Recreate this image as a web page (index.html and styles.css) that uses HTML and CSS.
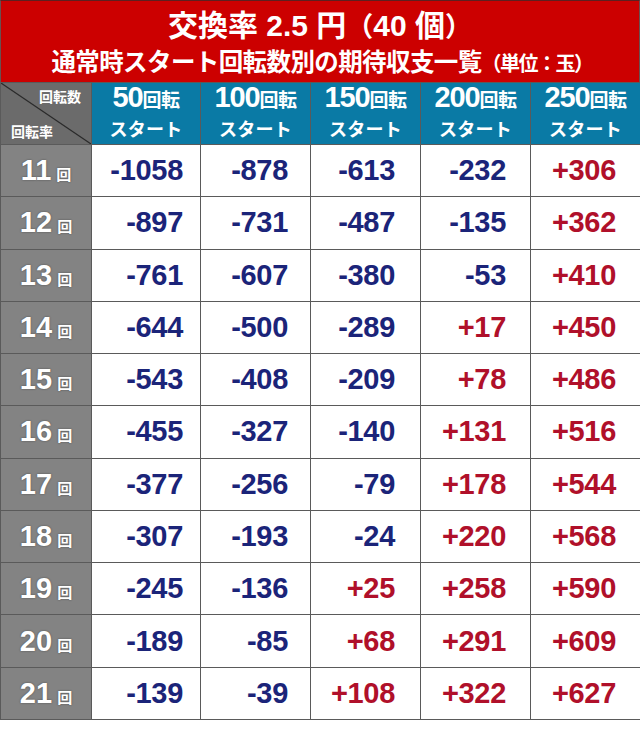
FILE: index.html
```html
<!DOCTYPE html>
<html lang="ja">
<head>
<meta charset="utf-8">
<title>交換率 2.5円（40個）</title>
<link rel="stylesheet" href="styles.css">
</head>
<body>
<div class="sheet">
  <header class="title">
    <div class="t1">交換率 2.5 円<span class="paren">（</span>40 個<span class="paren">）</span></div>
    <div class="t2">通常時スタート回転数別の期待収支一覧<span class="unit">（単位：玉）</span></div>
  </header>
  <table class="grid">
    <colgroup>
      <col class="c0"><col class="c1"><col class="c2"><col class="c3"><col class="c4"><col class="c5">
    </colgroup>
    <thead>
      <tr>
        <th class="corner">
          <svg class="diag" viewBox="0 0 91 62" preserveAspectRatio="none"><line x1="0" y1="0" x2="91" y2="62" stroke="#2a2a2a" stroke-width="1.2"/></svg>
          <span class="ctop">回転数</span>
          <span class="cbot">回転率</span>
        </th>
        <th class="colh"><span class="n">50</span><span class="k">回転</span><br><span class="s">スタート</span></th>
        <th class="colh"><span class="n">100</span><span class="k">回転</span><br><span class="s">スタート</span></th>
        <th class="colh"><span class="n">150</span><span class="k">回転</span><br><span class="s">スタート</span></th>
        <th class="colh"><span class="n">200</span><span class="k">回転</span><br><span class="s">スタート</span></th>
        <th class="colh"><span class="n">250</span><span class="k">回転</span><br><span class="s">スタート</span></th>
      </tr>
    </thead>
    <tbody>
      <tr><th class="rowh">11<span class="kai">回</span></th><td class="neg">-1058</td><td class="neg">-878</td><td class="neg">-613</td><td class="neg">-232</td><td class="pos">+306</td></tr>
      <tr><th class="rowh">12<span class="kai">回</span></th><td class="neg">-897</td><td class="neg">-731</td><td class="neg">-487</td><td class="neg">-135</td><td class="pos">+362</td></tr>
      <tr><th class="rowh">13<span class="kai">回</span></th><td class="neg">-761</td><td class="neg">-607</td><td class="neg">-380</td><td class="neg">-53</td><td class="pos">+410</td></tr>
      <tr><th class="rowh">14<span class="kai">回</span></th><td class="neg">-644</td><td class="neg">-500</td><td class="neg">-289</td><td class="pos">+17</td><td class="pos">+450</td></tr>
      <tr><th class="rowh">15<span class="kai">回</span></th><td class="neg">-543</td><td class="neg">-408</td><td class="neg">-209</td><td class="pos">+78</td><td class="pos">+486</td></tr>
      <tr><th class="rowh">16<span class="kai">回</span></th><td class="neg">-455</td><td class="neg">-327</td><td class="neg">-140</td><td class="pos">+131</td><td class="pos">+516</td></tr>
      <tr><th class="rowh">17<span class="kai">回</span></th><td class="neg">-377</td><td class="neg">-256</td><td class="neg">-79</td><td class="pos">+178</td><td class="pos">+544</td></tr>
      <tr><th class="rowh">18<span class="kai">回</span></th><td class="neg">-307</td><td class="neg">-193</td><td class="neg">-24</td><td class="pos">+220</td><td class="pos">+568</td></tr>
      <tr><th class="rowh">19<span class="kai">回</span></th><td class="neg">-245</td><td class="neg">-136</td><td class="pos">+25</td><td class="pos">+258</td><td class="pos">+590</td></tr>
      <tr><th class="rowh">20<span class="kai">回</span></th><td class="neg">-189</td><td class="neg">-85</td><td class="pos">+68</td><td class="pos">+291</td><td class="pos">+609</td></tr>
      <tr><th class="rowh">21<span class="kai">回</span></th><td class="neg">-139</td><td class="neg">-39</td><td class="pos">+108</td><td class="pos">+322</td><td class="pos">+627</td></tr>
    </tbody>
  </table>
</div>
</body>
</html>
```

FILE: styles.css
```css
html, body {
  margin: 0;
  padding: 0;
  background: #ffffff;
}
body {
  font-family: "Liberation Sans", "Noto Sans CJK JP", Arial, sans-serif;
  font-weight: bold;
}
.sheet {
  width: 640px;
}
.title {
  box-sizing: border-box;
  height: 82px;
  background: #cc0000;
  border-top: 1px solid #5c2020;
  border-left: 1px solid #6a5050;
  border-right: 1px solid #6a5050;
  color: #ffffff;
  display: flex;
  flex-direction: column;
  align-items: center;
  padding-top: 5px;
}
.t1 {
  font-size: 30px;
  line-height: 38px;
  white-space: nowrap;
}
.t1 .paren {
  font-family: "Noto Sans CJK JP", sans-serif;
  font-size: 27px;
}
.t2 {
  font-family: "Noto Sans CJK JP", sans-serif;
  font-size: 24.5px;
  line-height: 32px;
  letter-spacing: -0.6px;
  white-space: nowrap;
  margin-left: 4px;
}
.t2 .unit {
  font-size: 20px;
  letter-spacing: -1.5px;
}
.grid {
  border-collapse: collapse;
  table-layout: fixed;
  width: 640px;
}
.c0 { width: 91px; }
.c1 { width: 109px; }
.c2, .c3, .c4, .c5 { width: 110px; }
.grid th, .grid td {
  border: 1px solid #5a5a5a;
  padding: 0;
}
.grid thead tr {
  height: 62px;
}
.corner {
  position: relative;
  background: #6b6b6b;
  color: #ffffff;
  font-family: "Noto Sans CJK JP", sans-serif;
  font-size: 14px;
  line-height: 14px;
}
.diag {
  position: absolute;
  left: 0;
  top: 0;
  width: 100%;
  height: 100%;
}
.ctop {
  position: absolute;
  right: 10px;
  top: 6px;
}
.cbot {
  position: absolute;
  left: 10px;
  bottom: 6px;
}
.colh {
  background: #0a7aa5;
  color: #ffffff;
  text-align: center;
  vertical-align: middle;
  line-height: 26px;
  padding-top: 2px;
}
.colh .n {
  font-family: "Liberation Sans", Arial, sans-serif;
  font-size: 29px;
  letter-spacing: -1.2px;
}
.colh .k {
  font-family: "Noto Sans CJK JP", sans-serif;
  font-size: 19px;
  letter-spacing: -0.5px;
}
.colh .s {
  font-family: "Noto Sans CJK JP", sans-serif;
  font-size: 18px;
  letter-spacing: 0.3px;
}
.grid tbody tr {
  height: 52.27px;
}
.rowh {
  background: #838383;
  color: #ffffff;
  text-align: center;
  font-family: "Liberation Sans", Arial, sans-serif;
  font-size: 29px;
  text-shadow: 0 0 2px rgba(0, 0, 0, 0.45);
  white-space: nowrap;
}
.rowh .kai {
  font-family: "Noto Sans CJK JP", sans-serif;
  font-size: 15px;
  margin-left: 5px;
}
.grid td {
  text-align: right;
  font-size: 29px;
  letter-spacing: -0.3px;
  background: #ffffff;
}
.grid td:nth-child(2) { padding-right: 17px; }
.grid td:nth-child(3) { padding-right: 22px; }
.grid td:nth-child(4) { padding-right: 25px; }
.grid td:nth-child(5) { padding-right: 24px; }
.grid td:nth-child(6) { padding-right: 24px; }
.neg { color: #1b2479; }
.pos { color: #b0102a; }
```
